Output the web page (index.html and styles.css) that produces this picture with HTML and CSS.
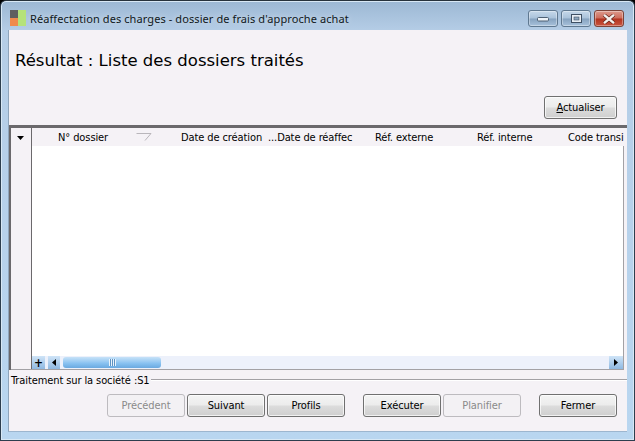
FILE: index.html
```html
<!DOCTYPE html>
<html lang="fr">
<head>
<meta charset="utf-8">
<title>Réaffectation des charges</title>
<link rel="stylesheet" href="styles.css">
</head>
<body>
<div class="window">
  <header class="titlebar">
    <svg class="app-icon" width="16" height="16" viewBox="0 0 16 16">
      <rect x="0" y="0" width="8" height="8" fill="#5f5f5f"/>
      <rect x="0" y="8" width="8" height="8" fill="#f08a4b"/>
      <rect x="8" y="0" width="8" height="16" fill="#b5e27a"/>
    </svg>
    <span class="title">Réaffectation des charges - dossier de frais d'approche achat</span>
    <div class="caption">
      <div class="cap-btn"><svg width="12" height="6" viewBox="0 0 12 6"><rect x="0.5" y="1.5" width="11" height="3.5" rx="1" fill="#eef3f8" stroke="#4e6074"/></svg></div>
      <div class="cap-btn"><svg width="11" height="9" viewBox="0 0 11 9"><rect x="0.5" y="0.5" width="10" height="8" fill="#e8eef5" stroke="#3f5064"/><rect x="3" y="3" width="5" height="3" fill="#8ea5bd" stroke="#3f5064" stroke-width="0.6"/></svg></div>
      <div class="cap-btn cap-close"><svg width="14" height="10" viewBox="0 0 14 10"><path d="M2 0.8 L12 9.2 M12 0.8 L2 9.2" stroke="#5a1f15" stroke-width="3.6"/><path d="M2 0.8 L12 9.2 M12 0.8 L2 9.2" stroke="#f4f1ee" stroke-width="2.4"/></svg></div>
    </div>
  </header>
  <main class="client">
    <h1 class="heading">Résultat : Liste des dossiers traités</h1>
    <div class="refresh-row">
      <button class="btn btn-refresh"><span class="key">A</span>ctualiser</button>
    </div>
    <section class="grid">
      <div class="grid-head">
        <div class="marker-head"><svg width="7" height="4" viewBox="0 0 7 4"><path d="M0 0 H7 L3.5 4 Z" fill="#000"/></svg></div>
        <div class="col col-num">N° dossier<svg class="sort" width="16" height="8" viewBox="0 0 16 8"><path d="M0.5 0.5 H15 L9 7.5" fill="none" stroke="#b9b6bb"/></svg></div>
        <div class="col col-created">Date de création</div>
        <div class="col col-realloc">...Date de réaffec</div>
        <div class="col col-ext">Réf. externe</div>
        <div class="col col-int">Réf. interne</div>
        <div class="col col-code">Code transi</div>
      </div>
      <div class="grid-body">
        <div class="marker-col"></div>
        <div class="rows"></div>
      </div>
      <div class="grid-foot">
        <div class="marker-col"></div>
        <div class="scroll-bar">
          <div class="sb-btn sb-plus">+</div>
          <div class="sb-btn sb-left"><svg width="4" height="7" viewBox="0 0 4 7"><path d="M4 0 V7 L0 3.5 Z" fill="#000"/></svg></div>
          <div class="sb-thumb"><span class="grip"></span></div>
          <div class="sb-track"></div>
          <div class="sb-btn sb-right"><svg width="4" height="7" viewBox="0 0 4 7"><path d="M0 0 V7 L4 3.5 Z" fill="#000"/></svg></div>
        </div>
      </div>
    </section>
    <div class="group">
      <span class="group-label">Traitement sur la société :S1</span>
      <span class="group-line"></span>
    </div>
    <footer class="actions">
      <button class="btn" disabled>Précédent</button>
      <button class="btn">Suivant</button>
      <button class="btn">Profils</button>
      <button class="btn btn-gap">Exécuter</button>
      <button class="btn" disabled>Planifier</button>
      <button class="btn btn-gap">Fermer</button>
    </footer>
  </main>
</div>
</body>
</html>
```
FILE: styles.css
```css
* { box-sizing: border-box; }
html, body { margin: 0; padding: 0; }
body {
  width: 635px;
  height: 441px;
  overflow: hidden;
  background: #000;
  font-family: "DejaVu Sans Condensed", "Noto Sans", sans-serif;
  font-stretch: condensed;
  font-size: 11px;
  letter-spacing: -0.1px;
  color: #000;
}
.window {
  width: 635px;
  height: 441px;
  display: flex;
  flex-direction: column;
  padding: 0 8px 8px 8px;
  border: 1px solid #2d3e4e;
  border-radius: 6px 6px 0 0;
  border-top-color: #26323c;
  background: linear-gradient(180deg, #9cb8d4 0, #b5cde6 30px, #b9d6f0 100%);
  box-shadow: inset 0 0 0 1px #d8e8f5;
}
.titlebar {
  height: 29px;
  flex: none;
  display: flex;
  align-items: center;
  margin-left: 1px;
  padding-top: 5px;
}
.app-icon { flex: none; }
.title {
  margin-left: 4px;
  margin-top: 1px;
  font-family: "Noto Sans", sans-serif;
  font-stretch: normal;
  font-size: 11px;
  letter-spacing: 0.09px;
  color: #101820;
  white-space: nowrap;
  text-shadow: 0 0 6px rgba(255,255,255,.6);
}
.caption {
  margin-left: auto;
  display: flex;
  gap: 3px;
  align-self: flex-start;
  margin-top: 4px;
  margin-right: 2px;
}
.cap-btn {
  width: 30px;
  height: 17px;
  display: flex;
  align-items: center;
  justify-content: center;
  border: 1px solid #5f7890;
  border-radius: 3px;
  background: linear-gradient(180deg, #c6d8ea 0, #a9c2da 48%, #86a2bf 52%, #a7c1db 100%);
  box-shadow: inset 0 0 0 1px rgba(255,255,255,.35);
}
.cap-close {
  width: 30px;
  border-color: #7c4338;
  background: linear-gradient(180deg, #dc9a8c 0, #cd6c5b 48%, #b2331f 52%, #c9543f 100%);
}
.client {
  flex: 1;
  margin: 0 -1px 0 -1px;
  min-height: 0;
  display: flex;
  flex-direction: column;
  background: #f5f2f6;
  border-left: 1px solid #8fa5bb;
  border-bottom: 1px solid #9db6cf;
}
.heading {
  margin: 20px 0 0 6px;
  font-family: "DejaVu Sans", sans-serif;
  font-stretch: normal;
  font-size: 16.5px;
  letter-spacing: 0;
  line-height: 22px;
  font-weight: 400;
  color: #000;
}
.refresh-row {
  display: flex;
  justify-content: flex-end;
  margin: 24px 10px 0 0;
}
.btn {
  width: 78px;
  height: 23px;
  padding: 0;
  font: inherit;
  letter-spacing: inherit;
  color: #000;
  border: 1px solid #707070;
  border-radius: 3px;
  background: linear-gradient(180deg, #f4f4f4 0, #ececec 48%, #dcdcdc 52%, #cfcfcf 100%);
  box-shadow: inset 0 0 0 1px rgba(255,255,255,.7);
}
.btn:disabled {
  color: #8a8a8a;
  border-color: #bdbbbf;
  background: #f3f1f4;
  box-shadow: none;
}
.btn-refresh { width: 73px; }
.key { text-decoration: underline; }
.grid {
  margin: 6px 0 0 0;
  height: 245px;
  flex: none;
  display: flex;
  flex-direction: column;
  padding-right: 3px;
  border-top: 3px solid #6b696c;
  border-left: 2px solid #6b696c;
}
.grid-head {
  height: 18px;
  flex: none;
  display: grid;
  grid-template-columns: 21px 149px 87px 107px 102px 91px 1fr;
  background: #f5f2f6;
  line-height: 20px;
  white-space: nowrap;
  overflow: visible;
}
.marker-head {
  display: flex;
  align-items: center;
  justify-content: center;
  padding-right: 1px;
  border-right: 1px solid #6b696c;
}
.col { position: relative; }
.col-num { padding-left: 26px; }
.sort { position: absolute; left: 104px; top: 5px; }
.grid-body { flex: 1; display: flex; min-height: 0; border-right: 1px solid #a3a1a5; }
.marker-col {
  width: 21px;
  flex: none;
  background: #f5f2f6;
  border-right: 1px solid #6b696c;
}
.rows { flex: 1; background: #fff; }
.grid-foot {
  height: 14px;
  flex: none;
  display: flex;
  border-right: 1px solid #a3a1a5;
  border-bottom: 1px solid #a3a1a5;
}
.scroll-bar {
  flex: 1;
  display: flex;
  align-items: stretch;
  background: #edf1fb;
}
.sb-btn {
  width: 13px;
  flex: none;
  display: flex;
  align-items: center;
  justify-content: center;
  background: linear-gradient(180deg, #cfe4f7 0, #8fb9e2 100%);
  font-size: 12px;
  font-weight: 700;
  line-height: 1;
}
.sb-plus { margin-right: 3px; }
.sb-left { width: 12px; margin-right: 3px; }
.sb-right { width: 14px; }
.sb-thumb {
  width: 98px;
  flex: none;
  margin: 1px 0;
  display: flex;
  align-items: center;
  justify-content: center;
  border-radius: 3px;
  background: linear-gradient(180deg, #c7e2f8 0, #86c0f0 60%, #6aa9e0 100%);
}
.grip {
  width: 7px;
  height: 7px;
  background: repeating-linear-gradient(90deg, #eaf4fc 0, #eaf4fc 1px, #5f93c4 1px, #5f93c4 2px);
}
.sb-track { flex: 1; }
.group {
  display: flex;
  align-items: center;
  height: 16px;
  margin: 2px 0 0 2px;
}
.group-label { white-space: nowrap; }
.group-line {
  flex: 1;
  height: 2px;
  margin-left: 1px;
  border-top: 1px solid #a3a1a5;
  border-bottom: 1px solid #fff;
}
.actions {
  display: flex;
  justify-content: flex-end;
  gap: 2px;
  margin: 6px 10px 0 0;
}
.btn-gap { margin-left: 16px; }
```
